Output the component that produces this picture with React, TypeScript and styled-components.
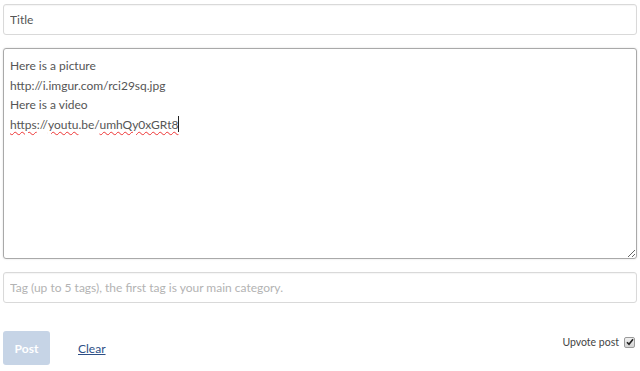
import React from "react";
import styled, { createGlobalStyle } from "styled-components";

const GlobalStyle = createGlobalStyle`
  html, body {
    margin: 0;
    padding: 0;
    background: #ffffff;
  }
  body {
    font-family: "Lato", "Open Sans", "Liberation Sans", sans-serif;
    font-size: 12px;
    color: #555555;
  }
`;

const Form = styled.form`
  display: flex;
  flex-direction: column;
  padding: 4px 3px 0 3px;
  width: 634px;
`;

const TextInput = styled.input`
  box-sizing: border-box;
  height: 31px;
  width: 100%;
  border: 1px solid #d9d9d9;
  border-radius: 3px;
  padding: 0 6px;
  font-family: inherit;
  font-size: 12px;
  color: #555;
  outline: none;
  box-shadow: inset 0 1px 1px rgba(0, 0, 0, 0.04);

  &::placeholder {
    color: #b3b3b3;
  }
`;

const Editor = styled.div`
  box-sizing: border-box;
  margin-top: 13px;
  height: 211px;
  width: 100%;
  border: 1px solid #a9a9a9;
  border-radius: 3px;
  padding: 7px 6px;
  font-size: 12px;
  line-height: 19.5px;
  color: #555;
  overflow: auto;
  resize: both;
  box-shadow: 0 0 2px rgba(0, 0, 0, 0.15);
`;

const Line = styled.div`
  white-space: nowrap;
`;

const Misspelled = styled.span`
  text-decoration: underline wavy #e33;
  text-decoration-thickness: 1px;
  text-underline-offset: 2px;
`;

const Caret = styled.span`
  display: inline-block;
  width: 1px;
  height: 16px;
  background: #222;
  vertical-align: -3px;
`;

const TagInput = styled(TextInput)`
  margin-top: 13px;
`;

const Actions = styled.div`
  display: flex;
  align-items: flex-start;
  margin-top: 28px;
`;

const PostButton = styled.button`
  width: 47px;
  height: 34px;
  border: none;
  border-radius: 3px;
  background: #c6d4e6;
  color: #ffffff;
  font-family: inherit;
  font-size: 12px;
  font-weight: 700;
  padding: 0;
`;

const ClearLink = styled.a`
  margin-left: 28px;
  margin-top: 10px;
  color: #2d4f86;
  text-decoration: underline;
  font-size: 12px;
  cursor: pointer;
`;

const Upvote = styled.label`
  margin-left: auto;
  margin-top: 5px;
  display: flex;
  align-items: center;
  gap: 5px;
  font-size: 10.5px;
  color: #444;
`;

const CheckBox = styled.span`
  box-sizing: border-box;
  display: inline-flex;
  align-items: center;
  justify-content: center;
  width: 11px;
  height: 11px;
  margin-right: 2px;
  border: 1px solid #9a9a9a;
  border-radius: 2px;
  background: linear-gradient(#f0f0f0, #d4d4d4);
`;

export default function App() {
  return (
    <>
      <GlobalStyle />
      <Form onSubmit={(e) => e.preventDefault()}>
        <TextInput defaultValue="Title" />
        <Editor>
          <Line>Here is a picture</Line>
          <Line>http://i.imgur.com/rci29sq.jpg</Line>
          <Line>Here is a video</Line>
          <Line>
            <Misspelled>https</Misspelled>://<Misspelled>youtu</Misspelled>.be/
            <Misspelled>umhQy0xGRt8</Misspelled>
            <Caret />
          </Line>
        </Editor>
        <TagInput placeholder="Tag (up to 5 tags), the first tag is your main category." />
        <Actions>
          <PostButton type="submit" disabled>
            Post
          </PostButton>
          <ClearLink>Clear</ClearLink>
          <Upvote>
            Upvote post
            <CheckBox role="checkbox" aria-checked="true">
              <svg width="8" height="8" viewBox="0 0 8 8">
                <path d="M1 4.2 L3 6.3 L7 1.2" fill="none" stroke="#222" strokeWidth="1.6" />
              </svg>
            </CheckBox>
          </Upvote>
        </Actions>
      </Form>
    </>
  );
}
